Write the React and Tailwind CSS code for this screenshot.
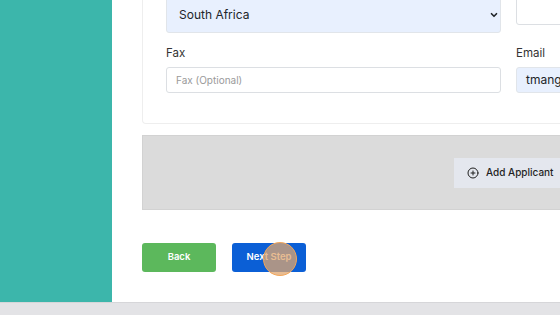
import { CirclePlus, ChevronDown } from 'lucide-react';

export default function App() {
  return (
    <div className="flex h-[315px] w-[560px] flex-col overflow-hidden bg-white font-['Inter',sans-serif] text-[#212529]">
      <div className="flex min-h-0 flex-1">
        <aside className="w-[112px] shrink-0 bg-[#3cb6ab]" />
        <main className="min-w-0 flex-1 overflow-hidden pl-[30px]">
          <div className="w-[451px]">
            <section className="-mt-[3px] rounded-b border border-t-0 border-[#eeeeee] px-[23px] pb-[30px]">
              <div className="flex gap-[15px]">
                <div className="w-[335px] shrink-0">
                  <div className="flex h-[36px] items-center justify-between rounded-[3px] border border-[#e1e5ea] bg-[#e8f0fe] pl-[12px] pr-[1px] text-[12px]">
                    <span>South Africa</span>
                    <ChevronDown className="size-[10px]" strokeWidth={4} aria-hidden="true" />
                  </div>
                </div>
                <div className="min-w-0 flex-1">
                  <div className="h-[28px] rounded-[3px] border border-[#dcdfe3] bg-white" />
                </div>
              </div>
              <div className="mt-[12px] flex gap-[15px]">
                <div className="w-[335px] shrink-0">
                  <div className="text-[11.5px] leading-[16px] text-[#333]">Fax</div>
                  <div className="mt-[6px] flex h-[26px] items-center rounded-[3px] border border-[#dcdfe3] bg-white px-[9px] text-[10px] text-[#9a9a9a]">
                    Fax (Optional)
                  </div>
                </div>
                <div className="min-w-0 flex-1">
                  <div className="text-[11.5px] leading-[16px] text-[#333]">Email</div>
                  <div className="mt-[6px] flex h-[26px] items-center overflow-hidden whitespace-nowrap rounded-[3px] border border-[#e1e5ea] bg-[#e8f0fe] px-[9px] text-[12px]">
                    tmange@example.com
                  </div>
                </div>
              </div>
            </section>
            <div className="mt-[11px] flex h-[75px] items-center border border-[#d2d2d2] bg-[#dbdbdb] pl-[311px]">
              <button
                type="button"
                className="flex h-[30px] shrink-0 items-center gap-[7px] bg-[#e4e7ee] pl-[13px] pr-[16px] text-[10px] font-medium text-[#1f1f1f]"
              >
                <CirclePlus className="size-[12px]" strokeWidth={2} aria-hidden="true" />
                Add Applicant
              </button>
            </div>
            <div className="mt-[33px] flex gap-[16px]">
              <button
                type="button"
                className="h-[29px] w-[74px] rounded-[3px] bg-[#5cb85c] text-[9.5px] font-semibold text-white"
              >
                Back
              </button>
              <button
                type="button"
                className="relative h-[29px] w-[74px] rounded-[3px] bg-[#0b5fd6] text-[9.5px] font-semibold text-white"
              >
                Next Step
                <span className="absolute left-[31px] top-[-1px] size-[34px] rounded-full border border-[#f2a65a] bg-[#e0a56d]/75" />
              </button>
            </div>
          </div>
        </main>
      </div>
      <footer className="h-[13px] shrink-0 border-t border-[#d6d6d9] bg-[#e3e3e6]" />
    </div>
  );
}
